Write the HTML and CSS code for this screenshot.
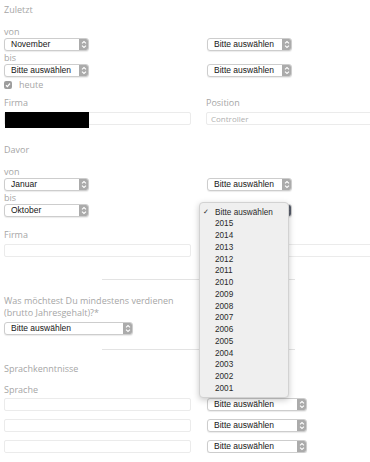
FILE: index.html
```html
<!DOCTYPE html>
<html lang="de">
<head>
    <meta charset="UTF-8">
    <meta name="viewport" content="width=device-width, initial-scale=1.0">
    <title>Werdegang</title>
    <link rel="stylesheet" href="styles.css">
</head>
<body>
<form class="page">
    <h3 class="section-title">Zuletzt</h3>
    <div class="row row-top">
        <div class="col">
            <label class="label">von</label>
            <span class="select w85">
                <select><option>November</option></select>
                <span class="arrow"><svg width="10" height="13" viewBox="0 0 10 13"><path d="M3 5.3 5 3.5 7 5.3M3 7.7 5 9.5 7 7.7" fill="none" stroke="#fff" stroke-width="1.1"/></svg></span>
            </span>
        </div>
        <div class="col">
            <span class="select w85 shift">
                <select><option>Bitte auswählen</option></select>
                <span class="arrow"><svg width="10" height="13" viewBox="0 0 10 13"><path d="M3 5.3 5 3.5 7 5.3M3 7.7 5 9.5 7 7.7" fill="none" stroke="#fff" stroke-width="1.1"/></svg></span>
            </span>
        </div>
    </div>
    <div class="row">
        <div class="col">
            <label class="label">bis</label>
            <span class="select w85">
                <select><option>Bitte auswählen</option></select>
                <span class="arrow"><svg width="10" height="13" viewBox="0 0 10 13"><path d="M3 5.3 5 3.5 7 5.3M3 7.7 5 9.5 7 7.7" fill="none" stroke="#fff" stroke-width="1.1"/></svg></span>
            </span>
        </div>
        <div class="col">
            <span class="select w85 shift">
                <select><option>Bitte auswählen</option></select>
                <span class="arrow"><svg width="10" height="13" viewBox="0 0 10 13"><path d="M3 5.3 5 3.5 7 5.3M3 7.7 5 9.5 7 7.7" fill="none" stroke="#fff" stroke-width="1.1"/></svg></span>
            </span>
        </div>
    </div>
    <label class="check-row">
        <span class="checkbox"><svg width="8" height="8" viewBox="0 0 8 8"><path d="M2 4.2 3.4 5.6 6 2.5" fill="none" stroke="#fff" stroke-width="1.3"/></svg></span>
        heute
    </label>
    <div class="row row-field">
        <div class="col">
            <label class="label">Firma</label>
            <span class="field">
                <input type="text">
                <span class="redact"></span>
            </span>
        </div>
        <div class="col">
            <label class="label">Position</label>
            <span class="field">
                <input type="text" placeholder="Controller">
            </span>
        </div>
    </div>

    <h3 class="section-title section-next">Davor</h3>
    <div class="row row-top">
        <div class="col">
            <label class="label">von</label>
            <span class="select w85">
                <select><option>Januar</option></select>
                <span class="arrow"><svg width="10" height="13" viewBox="0 0 10 13"><path d="M3 5.3 5 3.5 7 5.3M3 7.7 5 9.5 7 7.7" fill="none" stroke="#fff" stroke-width="1.1"/></svg></span>
            </span>
        </div>
        <div class="col">
            <span class="select w85 shift">
                <select><option>Bitte auswählen</option></select>
                <span class="arrow"><svg width="10" height="13" viewBox="0 0 10 13"><path d="M3 5.3 5 3.5 7 5.3M3 7.7 5 9.5 7 7.7" fill="none" stroke="#fff" stroke-width="1.1"/></svg></span>
            </span>
        </div>
    </div>
    <div class="row">
        <div class="col">
            <label class="label">bis</label>
            <span class="select w85">
                <select><option>Oktober</option></select>
                <span class="arrow"><svg width="10" height="13" viewBox="0 0 10 13"><path d="M3 5.3 5 3.5 7 5.3M3 7.7 5 9.5 7 7.7" fill="none" stroke="#fff" stroke-width="1.1"/></svg></span>
            </span>
        </div>
        <div class="col">
            <span class="select w85 shift open">
                <select><option>Bitte auswählen</option></select>
                <span class="arrow"><svg width="10" height="13" viewBox="0 0 10 13"><path d="M3 5.3 5 3.5 7 5.3M3 7.7 5 9.5 7 7.7" fill="none" stroke="#fff" stroke-width="1.1"/></svg></span>
                <ul class="menu">
                    <li class="checked">Bitte auswählen</li>
                    <li>2015</li>
                    <li>2014</li>
                    <li>2013</li>
                    <li>2012</li>
                    <li>2011</li>
                    <li>2010</li>
                    <li>2009</li>
                    <li>2008</li>
                    <li>2007</li>
                    <li>2006</li>
                    <li>2005</li>
                    <li>2004</li>
                    <li>2003</li>
                    <li>2002</li>
                    <li>2001</li>
                </ul>
            </span>
        </div>
    </div>
    <div class="row row-field row-field-next">
        <div class="col">
            <label class="label">Firma</label>
            <span class="field"><input type="text"></span>
        </div>
        <div class="col">
            <span class="field"><input type="text"></span>
        </div>
    </div>

    <hr class="divider">

    <div class="question">
        <label class="label label-wrap">Was möchtest Du mindestens verdienen (brutto Jahresgehalt)?*</label>
        <span class="select w129">
            <select><option>Bitte auswählen</option></select>
            <span class="arrow"><svg width="10" height="13" viewBox="0 0 10 13"><path d="M3 5.3 5 3.5 7 5.3M3 7.7 5 9.5 7 7.7" fill="none" stroke="#fff" stroke-width="1.1"/></svg></span>
        </span>
    </div>

    <hr class="divider divider-second">

    <h3 class="section-title section-lang">Sprachkenntnisse</h3>
    <label class="label label-lang">Sprache</label>
    <div class="row lang-row">
        <div class="col"><span class="field"><input type="text"></span></div>
        <div class="col">
            <span class="select w100 shift">
                <select><option>Bitte auswählen</option></select>
                <span class="arrow"><svg width="10" height="13" viewBox="0 0 10 13"><path d="M3 5.3 5 3.5 7 5.3M3 7.7 5 9.5 7 7.7" fill="none" stroke="#fff" stroke-width="1.1"/></svg></span>
            </span>
        </div>
    </div>
    <div class="row lang-row">
        <div class="col"><span class="field"><input type="text"></span></div>
        <div class="col">
            <span class="select w100 shift">
                <select><option>Bitte auswählen</option></select>
                <span class="arrow"><svg width="10" height="13" viewBox="0 0 10 13"><path d="M3 5.3 5 3.5 7 5.3M3 7.7 5 9.5 7 7.7" fill="none" stroke="#fff" stroke-width="1.1"/></svg></span>
            </span>
        </div>
    </div>
    <div class="row lang-row">
        <div class="col"><span class="field"><input type="text"></span></div>
        <div class="col">
            <span class="select w100 shift">
                <select><option>Bitte auswählen</option></select>
                <span class="arrow"><svg width="10" height="13" viewBox="0 0 10 13"><path d="M3 5.3 5 3.5 7 5.3M3 7.7 5 9.5 7 7.7" fill="none" stroke="#fff" stroke-width="1.1"/></svg></span>
            </span>
        </div>
    </div>
</form>
</body>
</html>
```

FILE: styles.css
```css
html, body {
    margin: 0;
    overflow: hidden;
    background: #fff;
}
.page {
    width: 393px;
    padding: 3px 0 0 4px;
    font-family: "Open Sans", sans-serif;
}
.section-title {
    margin: 0;
    font-size: 9px;
    line-height: 13px;
    font-weight: normal;
    color: #a6a6a6;
}
.section-next {
    margin-top: 18px;
}
.section-lang {
    margin-top: 12px;
}
.label {
    display: block;
    font-size: 9px;
    line-height: 13px;
    color: #a6a6a6;
}
.label-wrap {
    width: 187px;
    line-height: 12px;
}
.label-lang {
    margin-top: 8px;
}
.row {
    display: grid;
    grid-template-columns: 187px 187px;
    column-gap: 15px;
    align-items: end;
}
.row-top {
    margin-top: 9px;
}
.row-field {
    margin-top: 6px;
}
.row-field-next {
    margin-top: 11px;
}
.col {
    display: flex;
    flex-direction: column;
    align-items: flex-start;
}

/* selects */
.select {
    position: relative;
    display: block;
    height: 13px;
}
.select.shift {
    margin-left: 1px;
}
.w85 { width: 85px; }
.w100 { width: 100px; }
.w129 { width: 129px; }
.select select {
    appearance: none;
    -webkit-appearance: none;
    display: block;
    box-sizing: border-box;
    width: 100%;
    height: 13px;
    margin: 0;
    padding: 0 12px 0 6px;
    border: 1px solid #cdcdcd;
    border-radius: 3px;
    background: #fff;
    box-shadow: 0 1px 1px rgba(0, 0, 0, 0.08);
    font-family: "Liberation Sans", Arial, sans-serif;
    font-size: 8.5px;
    line-height: 11px;
    color: #161616;
}
.select .arrow {
    position: absolute;
    top: 1px;
    right: 1px;
    width: 9px;
    height: 11px;
    border-radius: 0 2px 2px 0;
    background: #ababab;
    display: flex;
    align-items: center;
    justify-content: center;
    overflow: hidden;
}
.select .arrow svg {
    display: block;
    flex: none;
}
.select.open .arrow {
    background: #555b68;
}

/* open dropdown */
.menu {
    position: absolute;
    left: -8px;
    top: -2px;
    z-index: 5;
    width: 90px;
    margin: 0;
    padding: 3.5px 0 2.5px;
    list-style: none;
    background: #efefef;
    border: 1px solid #d2d2d2;
    border-radius: 4px;
    box-sizing: border-box;
    box-shadow: 0 2px 6px rgba(0, 0, 0, 0.22);
    font-family: "Liberation Sans", Arial, sans-serif;
    font-size: 8.2px;
    line-height: 11.75px;
    color: #2a2a2a;
}
.menu li {
    position: relative;
    padding-left: 15px;
}
.menu li.checked::before {
    content: "\2713";
    position: absolute;
    left: 3px;
    font-family: "DejaVu Sans", sans-serif;
    font-size: 7px;
}

/* text fields */
.field {
    position: relative;
    display: block;
    width: 187px;
    margin-top: 3px;
}
.field input {
    display: block;
    box-sizing: border-box;
    width: 100%;
    height: 13px;
    margin: 0;
    padding: 0 4px;
    border: 1px solid #ebebeb;
    border-radius: 2px;
    background: #fff;
    font-family: "Open Sans", sans-serif;
    font-size: 8px;
    color: #444;
    outline: none;
}
.field input::placeholder {
    color: #b0b0b0;
}
.redact {
    position: absolute;
    left: 1px;
    top: 0;
    width: 84px;
    height: 16px;
    background: #000;
}

/* checkbox */
.check-row {
    display: flex;
    align-items: center;
    gap: 7px;
    margin-top: 2px;
    font-size: 9px;
    line-height: 11px;
    color: #a6a6a6;
}
.checkbox {
    display: flex;
    width: 8px;
    height: 8px;
    border-radius: 2px;
    background: #9d9d9d;
}

.divider {
    width: 193px;
    margin: 22px 0 0 98px;
    border: 0;
    border-top: 1px solid #e3e3e3;
    height: 0;
}
.divider-second {
    margin-top: 14px;
}
.question {
    margin-top: 15px;
}
.question .select {
    margin-top: 3px;
}
.lang-row {
    margin-top: 8px;
}
.label-lang + .lang-row {
    margin-top: 2px;
}
.lang-row .field {
    margin-top: 0;
}
```
